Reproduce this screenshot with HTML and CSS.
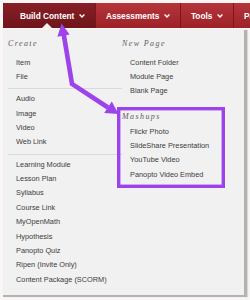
FILE: index.html
```html
<!DOCTYPE html>
<html>
<head>
<meta charset="utf-8">
<link rel="stylesheet" href="styles.css">
</head>
<body>
<div class="page">
  <nav class="nav">
    <div class="tab tab-active tab-first">Build Content<svg class="chev" viewBox="0 0 6 4"><polyline points="0.6,0.6 3,3 5.4,0.6"/></svg></div>
    <div class="tab">Assessments<svg class="chev" viewBox="0 0 6 4"><polyline points="0.6,0.6 3,3 5.4,0.6"/></svg></div>
    <div class="tab">Tools<svg class="chev" viewBox="0 0 6 4"><polyline points="0.6,0.6 3,3 5.4,0.6"/></svg></div>
    <div class="tab">Partner Content</div>
  </nav>
  <div class="panel">
    <div class="col col-left">
      <div class="heading">Create</div>
      <ul class="list">
        <li>Item</li>
        <li>File</li>
      </ul>
      <div class="sep"></div>
      <ul class="list">
        <li>Audio</li>
        <li>Image</li>
        <li>Video</li>
        <li>Web Link</li>
      </ul>
      <div class="sep"></div>
      <ul class="list">
        <li>Learning Module</li>
        <li>Lesson Plan</li>
        <li>Syllabus</li>
        <li>Course Link</li>
        <li>MyOpenMath</li>
        <li>Hypothesis</li>
        <li>Panopto Quiz</li>
        <li>Ripen (Invite Only)</li>
        <li>Content Package (SCORM)</li>
      </ul>
    </div>
    <div class="col col-right">
      <div class="heading">New Page</div>
      <ul class="list">
        <li>Content Folder</li>
        <li>Module Page</li>
        <li>Blank Page</li>
      </ul>
      <div class="heading heading-second">Mashups</div>
      <ul class="list">
        <li>Flickr Photo</li>
        <li>SlideShare Presentation</li>
        <li>YouTube Video</li>
        <li>Panopto Video Embed</li>
      </ul>
    </div>
  </div>
  <svg class="annot" viewBox="0 0 250 300" width="250" height="300">
    <rect x="118.7" y="108.7" width="104.6" height="77.6" fill="none" stroke="#9d43ec" stroke-width="3.4"/>
    <polyline points="63.5,33 72,84 108,107.5" fill="none" stroke="#9d43ec" stroke-width="4.6" stroke-linejoin="miter"/>
    <polygon points="61.5,23.5 69.6,34.5 57.4,36.7" fill="#9d43ec"/>
    <polygon points="118.5,114 104.2,113 111.8,101.6" fill="#9d43ec"/>
  </svg>
</div>
</body>
</html>
```
FILE: styles.css
```css
* { box-sizing: border-box; }
html, body { margin: 0; padding: 0; }
body {
  width: 250px;
  height: 300px;
  overflow: hidden;
  background: #ffffff;
  font-family: "Liberation Sans", Arial, sans-serif;
}
.page {
  position: relative;
  width: 250px;
  height: 300px;
  padding: 3px 0 0 3px;
  background: #faf6f6;
}
.nav {
  display: flex;
  height: 25px;
  overflow: hidden;
  white-space: nowrap;
  background: linear-gradient(#b5353b, #9d2228);
}
.tab {
  position: relative;
  display: flex;
  align-items: center;
  flex: 0 0 auto;
  padding: 0 10px;
  color: #ffffff;
  font-weight: bold;
  font-size: 8.3px;
  border-right: 1px solid #7c161b;
}
.tab-first { padding-left: 17px; }
.tab-active {
  background: linear-gradient(#871f26, #6f151b);
}
.tab-active::after {
  content: "";
  position: absolute;
  left: 39px;
  bottom: 0;
  border-left: 5px solid transparent;
  border-right: 5px solid transparent;
  border-bottom: 5px solid #f1f1f1;
}
.chev {
  width: 6px;
  height: 4px;
  margin-left: 4.5px;
  fill: none;
  stroke: #ffffff;
  stroke-width: 1.4;
}
.panel {
  display: flex;
  margin-top: 2px;
  width: 244px;
  padding: 8px 0 8px 5px;
  background: #f1f1f1;
  border-right: 3px solid #b3b3b3;
  border-bottom: 2px solid #b3b3b3;
  box-shadow: 1px 0 1px #d8d8d8;
}
.col-left { width: 114px; }
.col-right { flex: 1; }
.heading {
  font-family: "Liberation Serif", "Times New Roman", serif;
  font-style: italic;
  font-size: 8px;
  line-height: 12px;
  letter-spacing: 1.4px;
  color: #5c5c5c;
  margin-bottom: 5.5px;
}
.heading-second {
  margin-top: 12.6px;
  margin-bottom: 1.2px;
}
.list {
  list-style: none;
  margin: 0;
  padding: 0 0 0 8px;
}
.list li {
  font-size: 7.35px;
  line-height: 14.4px;
  color: #3c3c3c;
}
.sep {
  height: 1px;
  margin: 4px 0 2.8px 0;
  background: #dadada;
}
.annot {
  position: absolute;
  left: 0;
  top: 0;
  pointer-events: none;
}
```
